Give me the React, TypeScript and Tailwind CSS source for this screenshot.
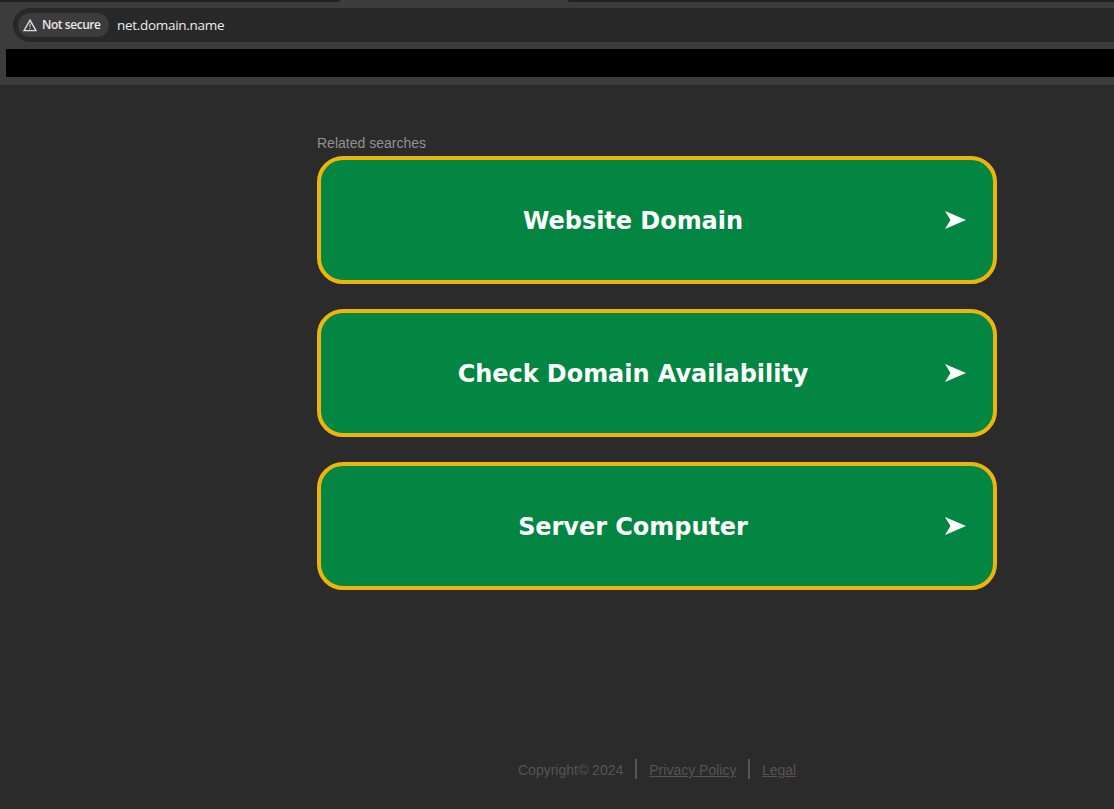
const searches = ['Website Domain', 'Check Domain Availability', 'Server Computer'];

function WarningIcon() {
  return (
    <svg width="14" height="13" viewBox="0 0 14 13" fill="none" className="shrink-0">
      <path d="M7 1.2 L13 11.6 H1 Z" stroke="#dedede" strokeWidth="1.4" />
      <path d="M7 4.6 V8.2 M7 9 V10.2" stroke="#bdbdbd" strokeWidth="1.2" />
    </svg>
  );
}

function BrowserBar() {
  return (
    <header className="flex h-[85px] shrink-0 flex-col bg-[#3c3c3c]">
      <div className="flex h-2 shrink-0 items-start justify-between">
        <div className="h-[2px] w-[340px] rounded-br-[3px] bg-[#222222]" />
        <div className="h-[2px] w-[546px] rounded-bl-[3px] bg-[#222222]" />
      </div>
      <div className="ml-[13px] flex h-[34px] shrink-0 items-center rounded-l-full bg-[#282828] pl-[5px] font-['Open_Sans',sans-serif]">
        <div className="flex h-6 w-[91px] items-center gap-[5px] rounded-full bg-[#3c3c3c] pl-[5px]">
          <WarningIcon />
          <span className="whitespace-nowrap text-[12px] font-semibold leading-4 tracking-[-0.45px] text-[#e8e8e8]">Not secure</span>
        </div>
        <span className="ml-2 whitespace-nowrap text-[13.5px] leading-5 tracking-[-0.3px] text-[#ececec]">net.domain.name</span>
      </div>
      <div className="ml-[6px] mt-[7px] h-7 shrink-0 bg-black" />
    </header>
  );
}

function SearchCard({ label }: { label: string }) {
  return (
    <a className="flex h-32 w-[680px] items-center rounded-[26px] border-4 border-[#ecb40c] bg-[#038641] pr-[27px] text-white">
      <span className="flex-1 whitespace-nowrap pt-[2px] text-center font-['DejaVu_Sans',sans-serif] text-[24px] font-bold leading-8 tracking-[-0.05px]">{label}</span>
      <svg width="21" height="18" viewBox="0 0 21 18" fill="currentColor" className="shrink-0">
        <path d="M0 0 L21 9 L0 18 L5.5 9 Z" />
      </svg>
    </a>
  );
}

export default function App() {
  return (
    <div className="flex h-[809px] w-full flex-col overflow-hidden bg-[#2b2b2b] font-['Liberation_Sans',Arial,sans-serif]">
      <BrowserBar />
      <main className="ml-[317px] mt-[50px] flex w-[680px] flex-col">
        <h1 className="h-[21px] text-[14px] leading-4 text-[#919191]">Related searches</h1>
        <div className="flex flex-col gap-[25px]">
          {searches.map((label) => (
            <SearchCard key={label} label={label} />
          ))}
        </div>
      </main>
      <footer className="ml-[518px] mt-[168px] flex items-center text-[14px] leading-5 text-[#555555]">
        <span className="pt-[2px]">Copyright© 2024</span>
        <span className="ml-3 h-5 w-[2px] bg-[#555555]" />
        <a className="ml-3 pt-[2px] underline">Privacy Policy</a>
        <span className="ml-[11.5px] h-5 w-[2px] bg-[#555555]" />
        <a className="ml-3 pt-[2px] underline">Legal</a>
      </footer>
    </div>
  );
}
